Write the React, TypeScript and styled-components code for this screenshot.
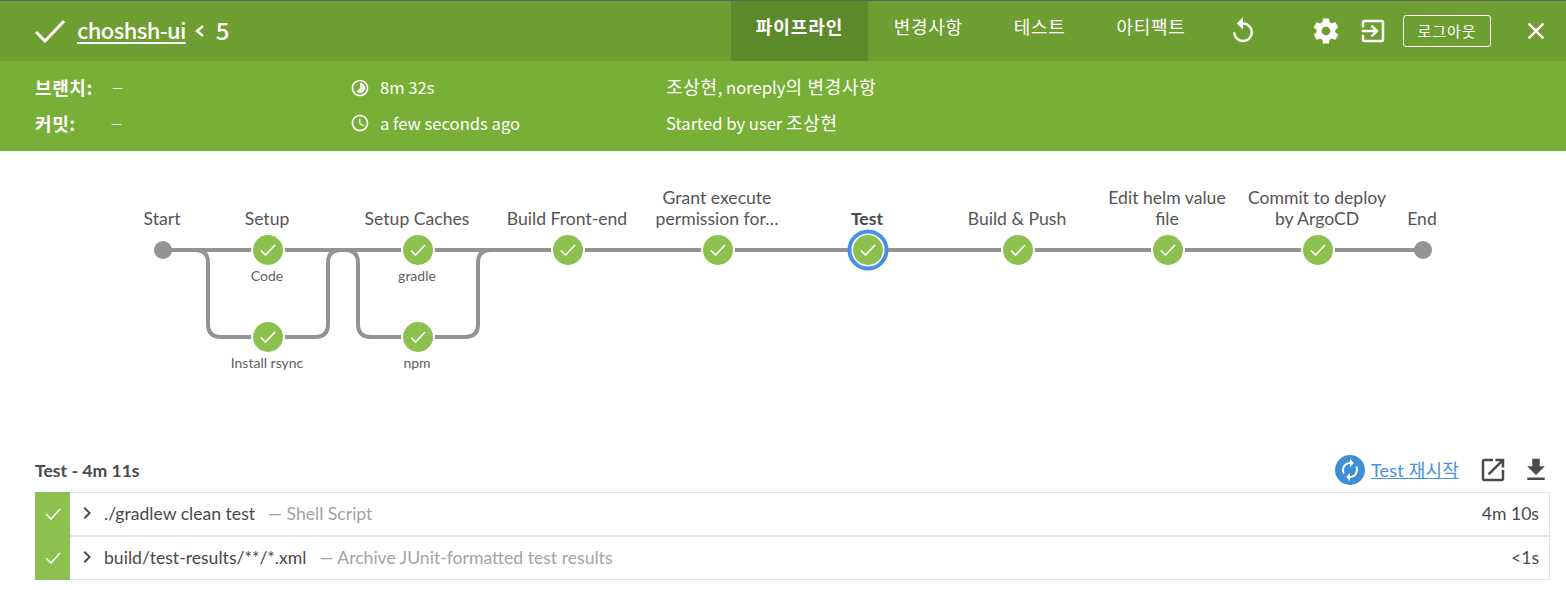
import React from 'react';
import styled, { createGlobalStyle } from 'styled-components';

const HEAD_FONT = '"Noto Sans CJK KR", "Noto Sans", sans-serif';
const BODY_FONT = 'Lato, "Noto Sans CJK KR", sans-serif';

const GlobalStyle = createGlobalStyle`
  html, body {
    margin: 0;
    background: #fff;
    color: #4a4a4a;
    font-family: ${BODY_FONT};
    font-size: 17.6px;
  }
  * { box-sizing: border-box; }
`;

const Page = styled.div`
  width: 1566px;
  height: 590px;
  overflow: hidden;
`;

const TopBar = styled.header`
  display: flex;
  align-items: center;
  height: 61px;
  padding-left: 35px;
  border-top: 1px solid #5f6660;
  background: #6d9e31;
  color: #fff;
  font-family: ${HEAD_FONT};
`;

const Brand = styled.div`
  display: flex;
  align-items: center;
  flex: 1;
  padding-bottom: 1px;
`;

const BrandLink = styled.a`
  margin: -3px 0 0 12px;
  color: #fff;
  font-size: 22px;
  font-weight: 500;
  letter-spacing: -0.6px;
  text-decoration: underline;
  text-underline-offset: 3px;
`;

const RunNumber = styled.span`
  margin: -3px 0 0 10px;
  font-size: 24px;
  font-weight: 500;
`;

const Tabs = styled.nav`
  display: flex;
  align-self: stretch;
`;

const Tab = styled.a<{ $active?: boolean }>`
  display: flex;
  align-items: center;
  padding: 0 ${(p) => (p.$active ? '25px' : '25.5px')} 10px;
  background: ${(p) => (p.$active ? '#5b8a2b' : 'transparent')};
  font-size: 18px;
  font-weight: ${(p) => (p.$active ? 700 : 400)};
  letter-spacing: ${(p) => (p.$active ? '0.9px' : '0.7px')};
`;

const IconSlot = styled.span<{ $gap: number }>`
  display: flex;
  margin-left: ${(p) => p.$gap}px;
`;

const LogoutButton = styled.button`
  width: 88px;
  height: 32px;
  margin-left: 15px;
  padding: 0 0 2px;
  border: 1px solid #fff;
  border-radius: 3px;
  background: transparent;
  color: #fff;
  font-family: ${HEAD_FONT};
  font-size: 15px;
  letter-spacing: 0.9px;
`;

const SubBar = styled.section`
  display: grid;
  grid-template-columns: 315px 316px 1fr;
  grid-auto-rows: 35.5px;
  align-items: center;
  height: 90px;
  padding: 9px 0 0 35px;
  background: #78b037;
  color: #fff;
  font-family: ${HEAD_FONT};
  font-size: 16.6px;
  line-height: 1;
`;

const MetaLabel = styled.span`
  display: flex;
  align-items: center;
  margin-top: -1px;
`;

const MetaKey = styled.b<{ $width: number }>`
  width: ${(p) => p.$width}px;
  font-size: 18px;
  font-weight: 700;
  letter-spacing: 0.6px;
`;

const Dash = styled.span`
  font-size: 12px;
`;

const MetaIcon = styled.span`
  display: flex;
  align-items: center;
  gap: 10px;
`;

const MetaText = styled.span`
  margin-top: -2px;
`;

const Korean = styled.span`
  font-size: 18px;
  letter-spacing: 0.7px;
`;

const Graph = styled.section`
  position: relative;
  height: 297px;
`;

const GraphSvg = styled.svg`
  display: block;
  position: absolute;
  top: 0;
  left: 0;
`;

const StageLabel = styled.div<{ $x: number; $bold?: boolean }>`
  position: absolute;
  left: ${(p) => p.$x - 80}px;
  bottom: 219px;
  width: 160px;
  color: ${(p) => (p.$bold ? '#4a4a4a' : '#555')};
  font-size: 17.6px;
  font-weight: ${(p) => (p.$bold ? 700 : 400)};
  line-height: 21px;
  text-align: center;
`;

const StepLabel = styled.div<{ $x: number; $y: number }>`
  position: absolute;
  left: ${(p) => p.$x - 60}px;
  top: ${(p) => p.$y}px;
  width: 120px;
  color: #5f5f5f;
  font-size: 14px;
  line-height: 16px;
  text-align: center;
`;

const Details = styled.section`
  padding: 0 16px 0 35px;
`;

const DetailsHead = styled.div`
  display: flex;
  align-items: center;
  height: 44px;
`;

const DetailsTitle = styled.h3`
  flex: 1;
  margin: 0;
  color: #4a4a4a;
  font-size: 17.6px;
  font-weight: 700;
`;

const RestartLink = styled.a`
  margin: 0 19px 0 6px;
  padding-bottom: 3px;
  color: #4a90e2;
  font-size: 18px;
  letter-spacing: 0.2px;
  text-decoration: underline;
`;

const HeadIcon = styled.span<{ $gap?: number; $edge?: number }>`
  display: flex;
  margin-left: ${(p) => p.$gap ?? 0}px;
  margin-right: ${(p) => p.$edge ?? 0}px;
  color: #4a4a4a;
`;

const StepRow = styled.div`
  display: flex;
  align-items: center;
  height: 44px;
  padding-bottom: 2px;
  border: 1px solid #e4e4e4;
  border-left: 0;
`;

const StepStatus = styled.span`
  display: flex;
  align-items: center;
  justify-content: center;
  align-self: stretch;
  width: 35px;
  margin: -1px 0 -3px;
  background: #8cc04f;
`;

const StepChevron = styled.span`
  display: flex;
  margin: 0 5px;
`;

const StepName = styled.span`
  color: #4a4a4a;
`;

const StepKind = styled.span`
  flex: 1;
  margin-left: 13px;
  color: #a3a3a3;
`;

const StepTime = styled.span`
  padding-right: 10px;
  color: #4a4a4a;
`;

type IconProps = { size: number; d: string; color?: string };

const Icon: React.FC<IconProps> = ({ size, d, color = '#fff' }) => (
  <svg width={size} height={size} viewBox="0 0 24 24" fill={color}>
    <path d={d} />
  </svg>
);

const ICONS = {
  replay: 'M12 5V1L7 6l5 5V7c3.31 0 6 2.69 6 6s-2.69 6-6 6-6-2.69-6-6H4c0 4.42 3.58 8 8 8s8-3.58 8-8-3.58-8-8-8z',
  gear: 'M19.43 12.98c.04-.32.07-.64.07-.98s-.03-.66-.07-.98l2.11-1.65c.19-.15.24-.42.12-.64l-2-3.46c-.12-.22-.39-.3-.61-.22l-2.49 1c-.52-.4-1.08-.73-1.69-.98l-.38-2.65C14.46 2.18 14.25 2 14 2h-4c-.25 0-.46.18-.49.42l-.38 2.65c-.61.25-1.17.59-1.69.98l-2.49-1c-.23-.09-.49 0-.61.22l-2 3.46c-.13.22-.07.49.12.64l2.11 1.65c-.04.32-.07.65-.07.98s.03.66.07.98l-2.11 1.65c-.19.15-.24.42-.12.64l2 3.46c.12.22.39.3.61.22l2.49-1c.52.4 1.08.73 1.69.98l.38 2.65c.03.24.24.42.49.42h4c.25 0 .46-.18.49-.42l.38-2.65c.61-.25 1.17-.59 1.69-.98l2.49 1c.23.09.49 0 .61-.22l2-3.46c.12-.22.07-.49-.12-.64l-2.11-1.65zM12 15.5c-1.93 0-3.5-1.57-3.5-3.5s1.57-3.5 3.5-3.5 3.5 1.57 3.5 3.5-1.57 3.5-3.5 3.5z',
  exit: 'M10.09 15.59L11.5 17l5-5-5-5-1.41 1.41L12.67 11H3v2h9.67l-2.58 2.59zM19 3H5c-1.11 0-2 .9-2 2v4h2V5h14v14H5v-4H3v4c0 1.1.89 2 2 2h14c1.1 0 2-.9 2-2V5c0-1.1-.9-2-2-2z',
  close: 'M19 6.41L17.59 5 12 10.59 6.41 5 5 6.41 10.59 12 5 17.59 6.41 19 12 13.41 17.59 19 19 17.59 13.41 12z',
  timelapse: 'M16.24 7.76C15.07 6.59 13.54 6 12 6v6l-4.24 4.24c2.34 2.34 6.14 2.34 8.49 0 2.34-2.34 2.34-6.14-.01-8.48zM12 2C6.48 2 2 6.48 2 12s4.48 10 10 10 10-4.48 10-10S17.52 2 12 2zm0 18c-4.42 0-8-3.58-8-8s3.58-8 8-8 8 3.58 8 8-3.58 8-8 8z',
  clock: 'M11.99 2C6.47 2 2 6.48 2 12s4.47 10 9.99 10C17.52 22 22 17.52 22 12S17.52 2 11.99 2zM12 20c-4.42 0-8-3.58-8-8s3.58-8 8-8 8 3.58 8 8-3.58 8-8 8zM12.5 7H11v6l5.25 3.15.75-1.23-4.5-2.67z',
  open: 'M19 19H5V5h7V3H5c-1.11 0-2 .9-2 2v14c0 1.1.89 2 2 2h14c1.1 0 2-.9 2-2v-7h-2v7zM14 3v2h3.59l-9.83 9.83 1.41 1.41L19 6.41V10h2V3h-7z',
  download: 'M19 9h-4V3H9v6H5l7 7 7-7zM5 18v2h14v-2H5z',
  chevron: 'M8.6 16.6L13.2 12 8.6 7.4 10 6l6 6-6 6z',
  renew: 'M12 6v3l4-4-4-4v3c-4.42 0-8 3.58-8 8 0 1.57.46 3.03 1.24 4.26L6.7 14.8c-.45-.83-.7-1.79-.7-2.8 0-3.31 2.69-6 6-6zm6.76 1.74L17.3 9.2c.44.84.7 1.79.7 2.8 0 3.31-2.69 6-6 6v-3l-4 4 4 4v-3c4.42 0 8-3.58 8-8 0-1.57-.46-3.03-1.24-4.26z',
};

// graph coordinates are relative to the top of the graph section (y=151 on the page)
const ROW_1 = 99;
const ROW_2 = 186;

const NODES: { x: number; y: number; selected?: boolean }[] = [
  { x: 268, y: ROW_1 },
  { x: 268, y: ROW_2 },
  { x: 418, y: ROW_1 },
  { x: 418, y: ROW_2 },
  { x: 568, y: ROW_1 },
  { x: 718, y: ROW_1 },
  { x: 868, y: ROW_1, selected: true },
  { x: 1018, y: ROW_1 },
  { x: 1168, y: ROW_1 },
  { x: 1318, y: ROW_1 },
];

const branch = (a: number, b: number) =>
  `M${a} ${ROW_1}Q${a + 13} ${ROW_1} ${a + 13} ${ROW_1 + 13}V${ROW_2 - 13}Q${a + 13} ${ROW_2} ${a + 26} ${ROW_2}H${b - 26}Q${b - 13} ${ROW_2} ${b - 13} ${ROW_2 - 13}V${ROW_1 + 13}Q${b - 13} ${ROW_1} ${b} ${ROW_1}`;

const PipelineGraph: React.FC = () => (
  <GraphSvg width={1566} height={297}>
    <g fill="none" stroke="#949393" strokeWidth={4}>
      <path d={`M163 ${ROW_1}H1423`} />
      <path d={branch(195, 341)} />
      <path d={branch(345, 491)} />
    </g>
    <circle cx={163} cy={ROW_1} r={9} fill="#949393" />
    <circle cx={1423} cy={ROW_1} r={9} fill="#949393" />
    {NODES.map((n) => (
      <g key={`${n.x}-${n.y}`}>
        <circle cx={n.x} cy={n.y} r={n.selected ? 20 : 17} fill="#fff" />
        {n.selected && <circle cx={n.x} cy={n.y} r={18.5} fill="none" stroke="#4a90e2" strokeWidth={4} />}
        <circle cx={n.x} cy={n.y} r={15} fill="#8cc04f" />
        <path
          d={`M${n.x - 7} ${n.y + 0.5}l4.5 4.5l9.5 -10`}
          fill="none"
          stroke="#fff"
          strokeWidth={1.6}
        />
      </g>
    ))}
  </GraphSvg>
);

const CheckMark: React.FC = () => (
  <svg width={16} height={14} viewBox="0 0 16 14">
    <path d="M1 7l5 5l9 -10" fill="none" stroke="#fff" strokeWidth={1.6} />
  </svg>
);

const App: React.FC = () => (
  <Page>
    <GlobalStyle />
    <TopBar>
      <Brand>
        <svg width={30} height={24} viewBox="0 0 30 24">
          <path d="M1 13l9 9L29 2" fill="none" stroke="#fff" strokeWidth={3} />
        </svg>
        <BrandLink>choshsh-ui</BrandLink>
        <svg width={12} height={14} viewBox="0 0 12 14" style={{ marginLeft: 8 }}>
          <path d="M9 2L3 7l6 5" fill="none" stroke="#fff" strokeWidth={2.4} />
        </svg>
        <RunNumber>5</RunNumber>
      </Brand>
      <Tabs>
        <Tab $active>파이프라인</Tab>
        <Tab>변경사항</Tab>
        <Tab>테스트</Tab>
        <Tab>아티팩트</Tab>
      </Tabs>
      <IconSlot $gap={17}>
        <Icon size={30} d={ICONS.replay} />
      </IconSlot>
      <IconSlot $gap={53}>
        <Icon size={30} d={ICONS.gear} />
      </IconSlot>
      <IconSlot $gap={17}>
        <Icon size={30} d={ICONS.exit} />
      </IconSlot>
      <LogoutButton>로그아웃</LogoutButton>
      <IconSlot $gap={31}>
        <Icon size={28} d={ICONS.close} />
      </IconSlot>
      <IconSlot $gap={16} />
    </TopBar>

    <SubBar>
      <MetaLabel>
        <MetaKey $width={77}>브랜치:</MetaKey>
        <Dash>—</Dash>
      </MetaLabel>
      <MetaIcon>
        <Icon size={20} d={ICONS.timelapse} />
        8m 32s
      </MetaIcon>
      <MetaText>
        <Korean>조상현</Korean>, noreply<Korean>의 변경사항</Korean>
      </MetaText>
      <MetaLabel>
        <MetaKey $width={76}>커밋:</MetaKey>
        <Dash>—</Dash>
      </MetaLabel>
      <MetaIcon>
        <Icon size={20} d={ICONS.clock} />
        a few seconds ago
      </MetaIcon>
      <MetaText>
        Started by user <Korean>조상현</Korean>
      </MetaText>
    </SubBar>

    <Graph>
      <PipelineGraph />
      <StageLabel $x={162}>Start</StageLabel>
      <StageLabel $x={267}>Setup</StageLabel>
      <StageLabel $x={417}>Setup Caches</StageLabel>
      <StageLabel $x={567}>Build Front-end</StageLabel>
      <StageLabel $x={717}>
        Grant execute
        <br />
        permission for…
      </StageLabel>
      <StageLabel $x={867} $bold>
        Test
      </StageLabel>
      <StageLabel $x={1017}>Build &amp; Push</StageLabel>
      <StageLabel $x={1167}>
        Edit helm value
        <br />
        file
      </StageLabel>
      <StageLabel $x={1317}>
        Commit to deploy
        <br />
        by ArgoCD
      </StageLabel>
      <StageLabel $x={1422}>End</StageLabel>
      <StepLabel $x={267} $y={117}>
        Code
      </StepLabel>
      <StepLabel $x={417} $y={117}>
        gradle
      </StepLabel>
      <StepLabel $x={267} $y={204}>
        Install rsync
      </StepLabel>
      <StepLabel $x={417} $y={204}>
        npm
      </StepLabel>
    </Graph>

    <Details>
      <DetailsHead>
        <DetailsTitle>Test - 4m 11s</DetailsTitle>
        <svg width={30} height={30} viewBox="0 0 30 30">
          <circle cx={15} cy={15} r={15} fill="#3d8fd6" />
          <g transform="translate(3 3)">
            <path d={ICONS.renew} fill="#fff" />
          </g>
        </svg>
        <RestartLink>Test 재시작</RestartLink>
        <HeadIcon>
          <Icon size={30} d={ICONS.open} color="#4a4a4a" />
        </HeadIcon>
        <HeadIcon $gap={13} $edge={-1}>
          <Icon size={30} d={ICONS.download} color="#4a4a4a" />
        </HeadIcon>
      </DetailsHead>
      <StepRow>
        <StepStatus>
          <CheckMark />
        </StepStatus>
        <StepChevron>
          <Icon size={24} d={ICONS.chevron} color="#4a4a4a" />
        </StepChevron>
        <StepName>./gradlew clean test</StepName>
        <StepKind>— Shell Script</StepKind>
        <StepTime>4m 10s</StepTime>
      </StepRow>
      <StepRow>
        <StepStatus>
          <CheckMark />
        </StepStatus>
        <StepChevron>
          <Icon size={24} d={ICONS.chevron} color="#4a4a4a" />
        </StepChevron>
        <StepName>build/test-results/**/*.xml</StepName>
        <StepKind>— Archive JUnit-formatted test results</StepKind>
        <StepTime>&lt;1s</StepTime>
      </StepRow>
    </Details>
  </Page>
);

export default App;
